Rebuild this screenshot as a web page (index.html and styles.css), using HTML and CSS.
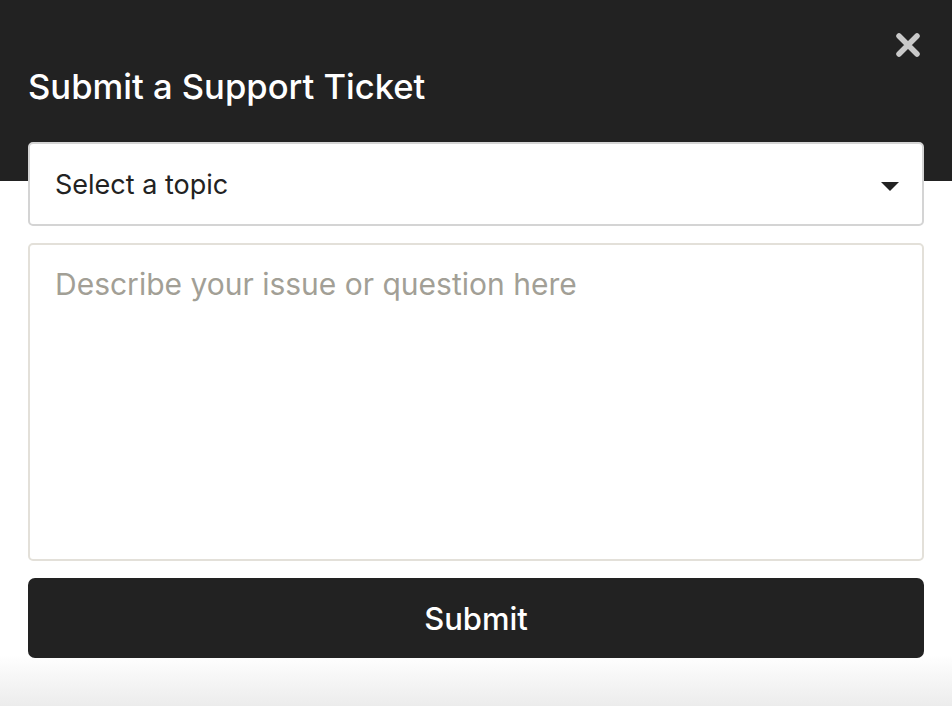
FILE: index.html
```html
<!DOCTYPE html>
<html lang="en">
  <head>
    <meta charset="UTF-8" />
    <meta name="viewport" content="width=device-width, initial-scale=1.0" />
    <title>Support Ticket</title>
    <link rel="stylesheet" href="styles.css">
  </head>
  <body>
    <div class="modal">
      <header class="modal-head">
        <h1>Submit a Support Ticket</h1>
        <button class="close" aria-label="Close">
          <svg width="24" height="24" viewBox="0 0 24 24">
            <path d="M3 3 L21 21 M21 3 L3 21" stroke="#c9c9c9" stroke-width="5.5" stroke-linecap="round" />
          </svg>
        </button>
      </header>

      <form class="ticket-form">
        <div class="select-wrap">
          <select class="topic">
            <option>Select a topic</option>
            <option>Billing</option>
            <option>Account</option>
            <option>Technical issue</option>
          </select>
          <span class="caret"></span>
        </div>
        <textarea placeholder="Describe your issue or question here"></textarea>
        <button type="button" class="submit">Submit</button>
      </form>
    </div>
  </body>
</html>
```

FILE: styles.css
```css
body {
  margin: 0;
  font-family: "Inter", "Noto Sans", sans-serif;
  background: linear-gradient(to bottom, #fff 0, #fff 655px, #ececec 706px);
  height: 706px;
  overflow: hidden;
}

/* Header band */
.modal {
  background: linear-gradient(to bottom, #222 0, #222 181px, transparent 181px);
  padding: 0 28px;
}

.modal-head {
  position: relative;
  padding: 66px 0 0 0;
  height: 76px;
}

.modal-head h1 {
  margin: 0;
  color: #fff;
  font-size: 34.6px;
  font-weight: 500;
  line-height: 40px;
}

.close {
  position: absolute;
  top: 33px;
  right: 4px;
  width: 24px;
  height: 24px;
  padding: 0;
  border: none;
  background: none;
  cursor: pointer;
}

.close svg {
  display: block;
}

/* Form */
.ticket-form {
  display: flex;
  flex-direction: column;
  gap: 17px;
}

.select-wrap {
  position: relative;
}

.topic {
  width: 100%;
  height: 84px;
  padding: 0 25px;
  font-family: inherit;
  font-size: 27px;
  color: #222;
  background: #fff;
  border: 2px solid #d4d4d4;
  border-radius: 5px;
  appearance: none;
  -webkit-appearance: none;
}

.caret {
  position: absolute;
  right: 25px;
  top: 40px;
  width: 0;
  height: 0;
  border-left: 9px solid transparent;
  border-right: 9px solid transparent;
  border-top: 9px solid #222;
  pointer-events: none;
}

textarea {
  height: 318px;
  padding: 21px 25px;
  box-sizing: border-box;
  font-family: inherit;
  font-size: 30px;
  color: #222;
  border: 2px solid #e3e0d9;
  border-radius: 5px;
  resize: none;
}

textarea::placeholder {
  color: #a29f96;
}

.submit {
  height: 80px;
  background: #222;
  color: #fff;
  border: none;
  border-radius: 7px;
  font-family: inherit;
  font-size: 31px;
  font-weight: 500;
  cursor: pointer;
}
```
